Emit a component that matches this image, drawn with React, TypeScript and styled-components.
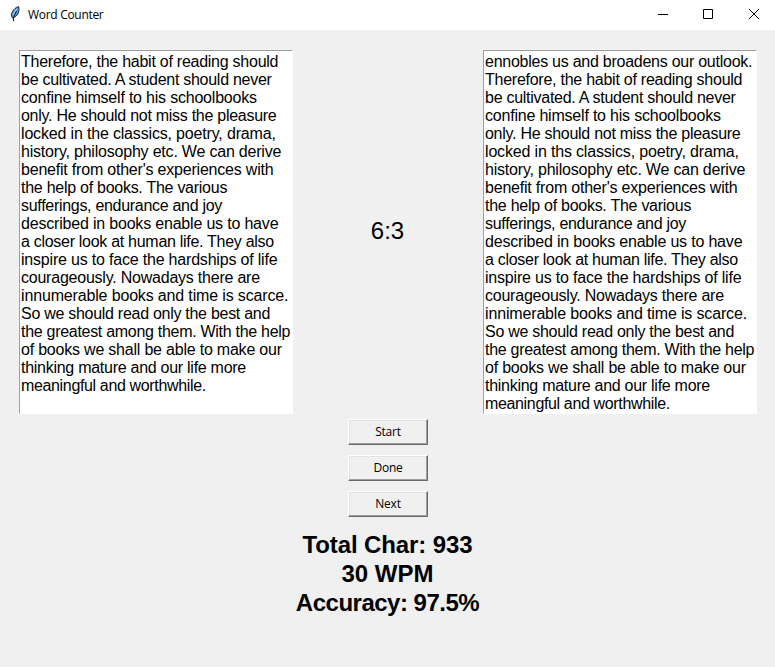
import React from "react";
import styled, { createGlobalStyle } from "styled-components";

const GlobalStyle = createGlobalStyle`
  * { box-sizing: border-box; }
  html, body { margin: 0; background: #f0f0f0; overflow: hidden; }
`;

const Window = styled.div`
  width: 775px;
  height: 667px;
  display: flex;
  flex-direction: column;
  background: #f0f0f0;
  color: #000;
  font-family: "Liberation Sans", Arial, sans-serif;
`;

const TitleBar = styled.header`
  height: 30px;
  flex: none;
  display: flex;
  align-items: center;
  background: #fff;
  font: 12px "Open Sans", "Noto Sans", sans-serif;
`;

const AppIcon = styled.svg`
  width: 16px;
  height: 16px;
  margin: 0 5px 2px 7px;
`;

const Title = styled.span`
  flex: 1;
  padding-bottom: 2px;
  letter-spacing: -0.3px;
`;

const Caption = styled.svg`
  width: 46px;
  height: 30px;
  fill: none;
  stroke: #000;
`;

const Panes = styled.main`
  display: grid;
  grid-template-columns: 274px 190px 274px;
  height: 364px;
  margin: 20px 0 0 19px;
`;

const TextPane = styled.div`
  padding: 2px 0 0 1px;
  background: #fff;
  border: 1px solid;
  border-color: #a0a0a0 #fff #fff #a0a0a0;
  font-size: 16px;
  line-height: 18px;
`;

const Line = styled.div<{ $tracking: number }>`
  letter-spacing: ${(p) => p.$tracking}px;
  white-space: nowrap;
`;

const Clock = styled.div`
  align-self: center;
  padding: 0 1px 2px 0;
  text-align: center;
  font-size: 24px;
  line-height: 28px;
`;

const Controls = styled.div`
  display: flex;
  flex-direction: column;
  align-items: center;
  gap: 10px;
  margin-top: 5px;
`;

const Button = styled.button`
  width: 80px;
  height: 26px;
  padding: 0 0 2px 1px;
  color: #000;
  background: #f0f0f0;
  border: 1px solid;
  border-color: #fff #696969 #696969 #fff;
  border-radius: 0;
  box-shadow: inset -1px -1px #a0a0a0, inset 1px 1px #e3e3e3;
  font: 12px "Open Sans", "Noto Sans", sans-serif;
  letter-spacing: -0.25px;
`;

const Results = styled.section`
  margin-top: 13px;
  text-align: center;
  font-size: 24px;
  font-weight: bold;
  line-height: 29px;
`;

const Result = styled.div<{ $tracking?: number }>`
  letter-spacing: ${(p) => p.$tracking ?? 0}px;
`;

type TextLine = [text: string, tracking: number];

const source: TextLine[] = [
  ["Therefore, the habit of reading should", -0.253],
  ["be cultivated. A student should never", -0.27],
  ["confine himself to his schoolbooks", -0.205],
  ["only. He should not miss the pleasure", -0.275],
  ["locked in the classics, poetry, drama,", -0.17],
  ["history, philosophy etc. We can derive", -0.206],
  ["benefit from other's experiences with", -0.207],
  ["the help of books. The various", -0.265],
  ["sufferings, endurance and joy", -0.297],
  ["described in books enable us to have", -0.19],
  ["a closer look at human life. They also", -0.29],
  ["inspire us to face the hardships of life", -0.195],
  ["courageously. Nowadays there are", -0.225],
  ["innumerable books and time is scarce.", -0.155],
  ["So we should read only the best and", -0.28],
  ["the greatest among them. With the help", -0.29],
  ["of books we shall be able to make our", -0.21],
  ["thinking mature and our life more", -0.27],
  ["meaningful and worthwhile.", -0.35],
];

const typed: TextLine[] = [
  ["ennobles us and broadens our outlook.", -0.255],
  ...source.map(([text, tracking]): TextLine => [
    text.replace("in the classics", "in ths classics").replace("innumerable", "innimerable"),
    tracking,
  ]),
];

const Passage = ({ lines }: { lines: TextLine[] }) => (
  <TextPane>
    {lines.map(([text, tracking]) => (
      <Line key={text} $tracking={tracking}>{text}</Line>
    ))}
  </TextPane>
);

export default function App() {
  return (
    <Window>
      <GlobalStyle />
      <TitleBar>
        <AppIcon viewBox="0 0 16 16">
          <path d="M5.5 12C2.8 8.5 6.2 2 11.6 0.6C13 5 10.6 11 5.5 12Z" fill="#5b9be0" stroke="#1c2530" />
          <path d="M6.2 9L9.6 2.8" fill="none" stroke="#b4d6f8" />
          <path d="M6.5 15.2L6.3 12L9.5 5" fill="none" stroke="#111" />
        </AppIcon>
        <Title>Word Counter</Title>
        <Caption><path d="M21 14.5h10" /></Caption>
        <Caption><path d="M20.5 9.5h9v9h-9z" /></Caption>
        <Caption><path d="M20 9l10 10M30 9l-10 10" /></Caption>
      </TitleBar>
      <Panes>
        <Passage lines={source} />
        <Clock>6:3</Clock>
        <Passage lines={typed} />
      </Panes>
      <Controls>
        <Button>Start</Button>
        <Button>Done</Button>
        <Button>Next</Button>
      </Controls>
      <Results>
        <Result $tracking={-0.1}>Total Char: 933</Result>
        <Result>30 WPM</Result>
        <Result $tracking={-0.5}>Accuracy: 97.5%</Result>
      </Results>
    </Window>
  );
}
